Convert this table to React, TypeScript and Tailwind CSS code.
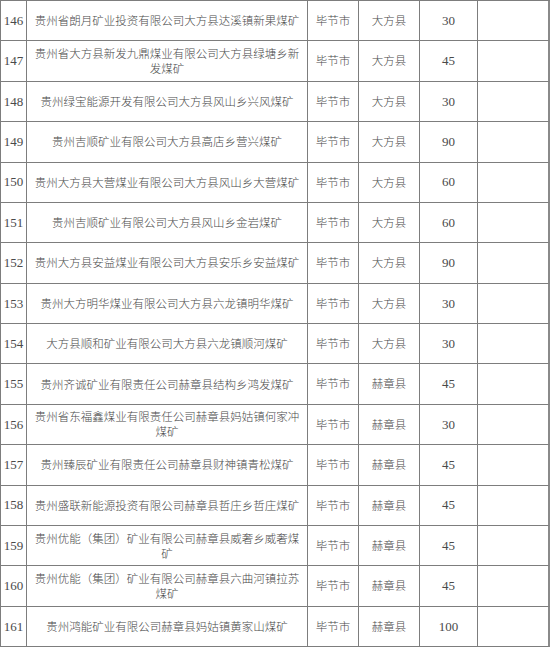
import React from 'react';

interface Mine {
  no: number;
  name: string;
  city: string;
  county: string;
  scale: number;
}

const mines: Mine[] = [
  { no: 146, name: '贵州省朗月矿业投资有限公司大方县达溪镇新果煤矿', city: '毕节市', county: '大方县', scale: 30 },
  { no: 147, name: '贵州省大方县新发九鼎煤业有限公司大方县绿塘乡新发煤矿', city: '毕节市', county: '大方县', scale: 45 },
  { no: 148, name: '贵州绿宝能源开发有限公司大方县风山乡兴风煤矿', city: '毕节市', county: '大方县', scale: 30 },
  { no: 149, name: '贵州吉顺矿业有限公司大方县高店乡营兴煤矿', city: '毕节市', county: '大方县', scale: 90 },
  { no: 150, name: '贵州大方县大营煤业有限公司大方县风山乡大营煤矿', city: '毕节市', county: '大方县', scale: 60 },
  { no: 151, name: '贵州吉顺矿业有限公司大方县风山乡金岩煤矿', city: '毕节市', county: '大方县', scale: 60 },
  { no: 152, name: '贵州大方县安益煤业有限公司大方县安乐乡安益煤矿', city: '毕节市', county: '大方县', scale: 90 },
  { no: 153, name: '贵州大方明华煤业有限公司大方县六龙镇明华煤矿', city: '毕节市', county: '大方县', scale: 30 },
  { no: 154, name: '大方县顺和矿业有限公司大方县六龙镇顺河煤矿', city: '毕节市', county: '大方县', scale: 30 },
  { no: 155, name: '贵州齐诚矿业有限责任公司赫章县结构乡鸿发煤矿', city: '毕节市', county: '赫章县', scale: 45 },
  { no: 156, name: '贵州省东福鑫煤业有限责任公司赫章县妈姑镇何家冲煤矿', city: '毕节市', county: '赫章县', scale: 30 },
  { no: 157, name: '贵州臻辰矿业有限责任公司赫章县财神镇青松煤矿', city: '毕节市', county: '赫章县', scale: 45 },
  { no: 158, name: '贵州盛联新能源投资有限公司赫章县哲庄乡哲庄煤矿', city: '毕节市', county: '赫章县', scale: 45 },
  { no: 159, name: '贵州优能（集团）矿业有限公司赫章县威奢乡威奢煤矿', city: '毕节市', county: '赫章县', scale: 45 },
  { no: 160, name: '贵州优能（集团）矿业有限公司赫章县六曲河镇拉苏煤矿', city: '毕节市', county: '赫章县', scale: 45 },
  { no: 161, name: '贵州鸿能矿业有限公司赫章县妈姑镇黄家山煤矿', city: '毕节市', county: '赫章县', scale: 100 },
];

const cjk = "font-['Noto_Sans_CJK_SC',sans-serif] font-light";
const num = "font-['Liberation_Serif','Noto_Sans_CJK_SC',serif]";
const cell = 'flex items-center justify-center text-center border-r border-b border-[#7d7d7d]';

export default function App() {
  return (
    <div className="w-[550px] h-[647px] bg-white overflow-hidden">
      <div className="grid grid-cols-[26px_281px_51px_61px_58px_72px] grid-rows-[repeat(16,minmax(0,1fr))] h-[647px] border-l border-t border-[#7d7d7d] text-[#4a4a4a]">
        {mines.map((m) => (
          <React.Fragment key={m.no}>
            <div className={`${cell} ${num} text-[13px]`}>{m.no}</div>
            <div className={`${cell} ${cjk} text-[11.5px] leading-[15px] px-[6px]`}>{m.name}</div>
            <div className={`${cell} ${cjk} text-[11.5px]`}>{m.city}</div>
            <div className={`${cell} ${cjk} text-[11.5px]`}>{m.county}</div>
            <div className={`${cell} ${num} text-[13px]`}>{m.scale}</div>
            <div className={`${cell} border-r-2 border-r-[#8a8a8a]`} />
          </React.Fragment>
        ))}
      </div>
    </div>
  );
}
